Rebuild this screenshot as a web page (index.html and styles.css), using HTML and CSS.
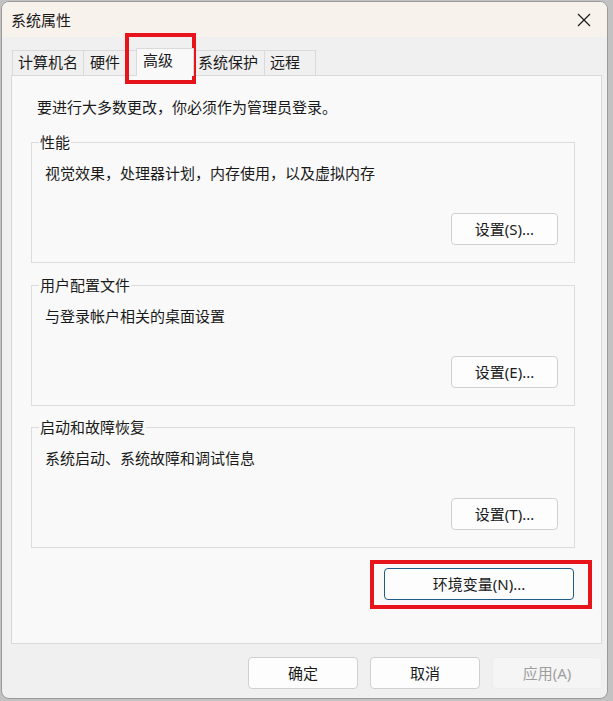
FILE: index.html
```html
<!DOCTYPE html>
<html lang="zh-CN">
<head>
<meta charset="utf-8">
<title>系统属性</title>
<link rel="stylesheet" href="styles.css">
</head>
<body>
<div class="window">
  <div class="titlebar">
    <span class="title">系统属性</span>
    <span class="close">
      <svg width="14" height="14" viewBox="0 0 14 14"><path d="M1 1 L13 13 M13 1 L1 13" stroke="#1b1b1b" stroke-width="1.2" fill="none"/></svg>
    </span>
  </div>
  <div class="content">
    <div class="tabs">
      <div class="tab t1">计算机名</div>
      <div class="tab t2">硬件</div>
      <div class="tab t3 selected">高级</div>
      <div class="tab t4">系统保护</div>
      <div class="tab t5">远程</div>
    </div>
    <div class="panel">
      <div class="note">要进行大多数更改，你必须作为管理员登录。</div>
      <div class="group g1">
        <div class="legend">性能</div>
        <div class="desc">视觉效果，处理器计划，内存使用，以及虚拟内存</div>
        <div class="btn settings">设置(S)...</div>
      </div>
      <div class="group g2">
        <div class="legend">用户配置文件</div>
        <div class="desc">与登录帐户相关的桌面设置</div>
        <div class="btn settings">设置(E)...</div>
      </div>
      <div class="group g3">
        <div class="legend">启动和故障恢复</div>
        <div class="desc">系统启动、系统故障和调试信息</div>
        <div class="btn settings">设置(T)...</div>
      </div>
      <div class="btn env">环境变量(N)...</div>
    </div>
    <div class="footer">
      <div class="btn foot">确定</div>
      <div class="btn foot">取消</div>
      <div class="btn foot disabled">应用(A)</div>
    </div>
  </div>
</div>
<div class="mark mark-tab"></div>
<div class="mark mark-env"></div>
</body>
</html>
```
FILE: styles.css
```css
* { box-sizing: border-box; }
html, body { margin: 0; padding: 0; }
body {
  width: 613px;
  height: 701px;
  background: #c2c2c2;
  font-family: "Noto Sans", "Noto Sans CJK SC", sans-serif;
  font-size: 15px;
  color: #1a1a1a;
  position: relative;
  overflow: hidden;
}
.window {
  margin: 1px 0 0 1px;
  width: 607px;
  height: 698px;
  border: 1px solid #9a9a9a;
  border-radius: 8px;
  background: #f0f0f0;
  overflow: hidden;
  display: flex;
  flex-direction: column;
}
.titlebar {
  height: 35px;
  background: #f8f2ec;
  display: flex;
  align-items: center;
  justify-content: space-between;
  padding: 0 16px 0 9px;
  flex: none;
}
.title { line-height: 20px; margin-top: 0px; }
.close { display: flex; width: 14px; height: 14px; }
.content {
  padding: 11px 5px 0 9px;
  display: flex;
  flex-direction: column;
}
.tabs {
  display: flex;
  align-items: flex-end;
  margin-left: 1px;
  height: 27px;
}
.tab {
  height: 25px;
  border: 1px solid #dadada;
  border-bottom: none;
  line-height: 23px;
  padding-bottom: 1px;
  white-space: nowrap;
  background: #f0f0f0;
}
.t1 { width: 72px; padding-left: 5px; }
.t2 { width: 55px; margin-left: -1px; padding-left: 6px; }
.t3 { width: 58px; margin-left: -2px; padding-left: 6px; }
.t4 { width: 73px; margin-left: -2px; padding-left: 5px; }
.t5 { width: 52px; margin-left: -1px; padding-left: 5px; }
.tab.selected {
  height: 28px;
  line-height: 22px;
  padding-bottom: 5px;
  margin-bottom: -1px;
  background: #f9f9f9;
  position: relative;
  z-index: 1;
}
.panel {
  width: 591px;
  border: 1px solid #d9d9d9;
  background: #f9f9f9;
  padding: 21px 26px 43px 19px;
  display: flex;
  flex-direction: column;
}
.note { line-height: 20px; margin-left: 6px; }
.group {
  border: 1px solid #dcdcdc;
  padding: 0 16px 17px 13px;
  display: flex;
  flex-direction: column;
}
.g1 { margin-top: 25px; }
.g2 { margin-top: 22px; }
.g3 { margin-top: 21px; }
.legend {
  align-self: flex-start;
  margin-top: -11px;
  margin-left: -6px;
  padding: 0 1px;
  line-height: 20px;
  background: #f9f9f9;
}
.desc { margin-top: 11px; line-height: 20px; }
.btn {
  height: 32px;
  border: 1px solid #d0d0d0;
  border-radius: 4px;
  background: #fdfdfd;
  display: flex;
  align-items: center;
  justify-content: center;
  line-height: 20px;
}
.settings {
  align-self: flex-end;
  width: 107px;
  margin-top: 30px;
}
.env {
  align-self: flex-end;
  width: 190px;
  margin-top: 20px;
  margin-right: 1px;
  border-color: #1e5c87;
}
.footer {
  display: flex;
  justify-content: flex-end;
  gap: 12px;
  margin-top: 13px;
  width: 591px;
}
.foot { width: 110px; }
.foot.disabled {
  background: #f5f5f5;
  border-color: #ececec;
  color: #9e9e9e;
}
.mark {
  position: absolute;
  border: 4px solid #e8141c;
  pointer-events: none;
}
.mark-tab { left: 125px; top: 33px; width: 71px; height: 51px; }
.mark-env { left: 370px; top: 560px; width: 222px; height: 49px; }
```
